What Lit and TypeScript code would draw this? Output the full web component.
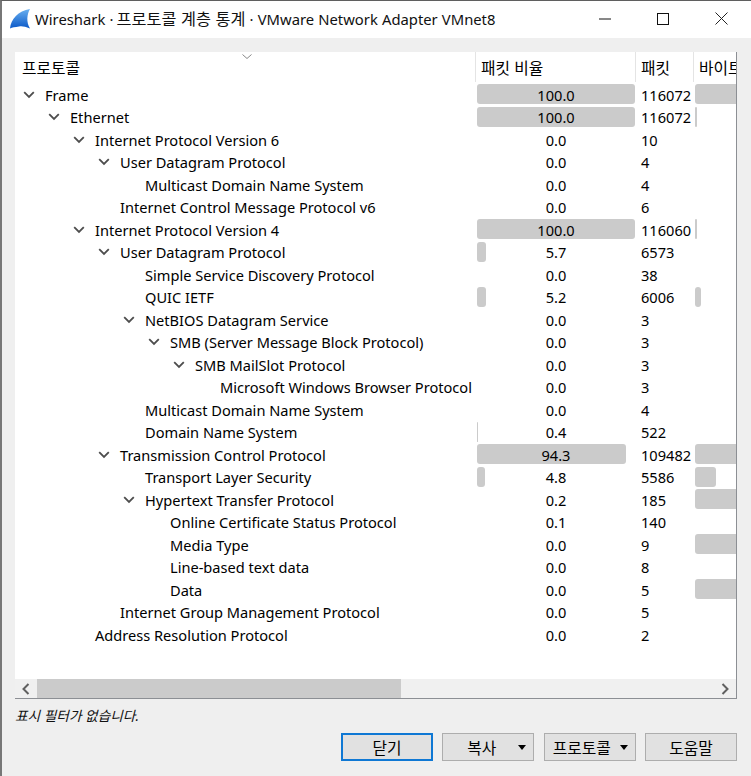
import { LitElement, html, css } from "lit";
import { customElement } from "lit/decorators.js";

type Row = { d: number; n: string; open?: boolean; p: string; pw: number; c: string; bw: number };
const rows: Row[] = [
  { d: 0, n: "Frame", open: true, p: "100.0", pw: 158, c: "116072", bw: 60 },
  { d: 1, n: "Ethernet", open: true, p: "100.0", pw: 158, c: "116072", bw: 1.5 },
  { d: 2, n: "Internet Protocol Version 6", open: true, p: "0.0", pw: 0, c: "10", bw: 0 },
  { d: 3, n: "User Datagram Protocol", open: true, p: "0.0", pw: 0, c: "4", bw: 0 },
  { d: 4, n: "Multicast Domain Name System", p: "0.0", pw: 0, c: "4", bw: 0 },
  { d: 3, n: "Internet Control Message Protocol v6", p: "0.0", pw: 0, c: "6", bw: 0 },
  { d: 2, n: "Internet Protocol Version 4", open: true, p: "100.0", pw: 158, c: "116060", bw: 1.5 },
  { d: 3, n: "User Datagram Protocol", open: true, p: "5.7", pw: 9, c: "6573", bw: 0 },
  { d: 4, n: "Simple Service Discovery Protocol", p: "0.0", pw: 0, c: "38", bw: 0 },
  { d: 4, n: "QUIC IETF", p: "5.2", pw: 9, c: "6006", bw: 6 },
  { d: 4, n: "NetBIOS Datagram Service", open: true, p: "0.0", pw: 0, c: "3", bw: 0 },
  { d: 5, n: "SMB (Server Message Block Protocol)", open: true, p: "0.0", pw: 0, c: "3", bw: 0 },
  { d: 6, n: "SMB MailSlot Protocol", open: true, p: "0.0", pw: 0, c: "3", bw: 0 },
  { d: 7, n: "Microsoft Windows Browser Protocol", p: "0.0", pw: 0, c: "3", bw: 0 },
  { d: 4, n: "Multicast Domain Name System", p: "0.0", pw: 0, c: "4", bw: 0 },
  { d: 4, n: "Domain Name System", p: "0.4", pw: 1, c: "522", bw: 0 },
  { d: 3, n: "Transmission Control Protocol", open: true, p: "94.3", pw: 149, c: "109482", bw: 60 },
  { d: 4, n: "Transport Layer Security", p: "4.8", pw: 8, c: "5586", bw: 21 },
  { d: 4, n: "Hypertext Transfer Protocol", open: true, p: "0.2", pw: 0, c: "185", bw: 60 },
  { d: 5, n: "Online Certificate Status Protocol", p: "0.1", pw: 0, c: "140", bw: 0 },
  { d: 5, n: "Media Type", p: "0.0", pw: 0, c: "9", bw: 60 },
  { d: 5, n: "Line-based text data", p: "0.0", pw: 0, c: "8", bw: 0 },
  { d: 5, n: "Data", p: "0.0", pw: 0, c: "5", bw: 60 },
  { d: 3, n: "Internet Group Management Protocol", p: "0.0", pw: 0, c: "5", bw: 0 },
  { d: 2, n: "Address Resolution Protocol", p: "0.0", pw: 0, c: "2", bw: 0 },
];

@customElement("app-root")
export class AppRoot extends LitElement {
  static styles = css`
    :host {
      display: block;
      width: 751px;
      height: 776px;
      overflow: hidden;
      font-family: "Noto Sans", "Noto Sans CJK KR", sans-serif;
      font-size: 14.6px;
      color: #000;
      background: #efefef;
    }
    .win {
      height: 776px;
      box-sizing: border-box;
      border-top: 1px solid #5f5f5f;
      border-left: 2px solid #777;
      display: flex;
      flex-direction: column;
    }
    .title {
      height: 37px;
      flex: none;
      background: #fff;
      display: flex;
      align-items: center;
      padding-left: 8px;
      white-space: nowrap;
      color: #111;
      font-size: 14.8px;
    }
    .logo { width: 20px; height: 20px; flex: none; margin: -1px 5px 0 0; }
    .title .t { flex: 1; line-height: 20px; margin-top: -2px; word-spacing: 0.3px; }
    .ko { font-size: 16.3px; line-height: 16px; margin-left: -1px; }
    .wb { width: 58.5px; height: 36px; display: flex; align-items: center; justify-content: center; flex: none; }
    .wb svg { display: block; margin-top: -2px; }
    .body { flex: 1; display: flex; flex-direction: column; padding: 14px 14px 0 13px; min-height: 0; }
    .tree {
      height: 647px;
      flex: none;
      box-sizing: border-box;
      background: #fff;
      border-right: 1px solid #8c8f94;
      border-bottom: 1px solid #8c8f94;
      display: flex;
      flex-direction: column;
      position: relative;
    }
    .sort { position: absolute; left: 227px; top: 2px; }
    .list { flex: 1; min-height: 0; overflow: hidden; }
    .grid { display: grid; grid-template-columns: 461px 160px 58px 42px; }
    .head { height: 32px; align-items: start; }
    .hc {
      height: 30px;
      display: flex;
      align-items: center;
      padding: 0 0 0 5px;
      white-space: nowrap;
      overflow: hidden;
      border-right: 1px solid #e4e4e4;
      box-sizing: border-box;
      font-size: 15.8px;
    }
    .hc.first { padding-left: 7px; }
    .hc.last { border-right: 0; }
    .row { height: 22.5px; }
    .name { display: flex; align-items: center; white-space: nowrap; overflow: hidden; height: 21.5px; }
    .tw { width: 25px; margin-right: 4px; flex: none; display: flex; justify-content: center; }
    .indent { flex: none; }
    .num { position: relative; height: 21.5px; display: flex; align-items: center; white-space: nowrap; }
    .pct { justify-content: center; }
    .cnt { padding-left: 5px; }
    .bar {
      position: absolute;
      left: 1px;
      top: 0;
      height: 20px;
      background: #cbcbcb;
      border-radius: 3px;
    }
    .bar.b3 { left: 1px; }
    .bar.b3.full { border-radius: 3px 0 0 3px; }
    .cell3 { overflow: hidden; }
    .lbl { position: relative; }
    .sb { height: 19px; flex: none; background: #f0f0f0; display: flex; align-items: stretch; }
    .arrow { width: 22px; flex: none; display: flex; align-items: center; justify-content: center; }
    .thumb { width: 364px; flex: none; background: #cbcbcb; }
    .fill { flex: 1; }
    .status { height: 32px; flex: none; font-style: italic; font-size: 13.7px; display: flex; align-items: center; color: #111; }
    .btns { display: flex; justify-content: flex-end; gap: 9.33px; padding-top: 2px; }
    .btn {
      width: 92px;
      height: 28px;
      box-sizing: border-box;
      border: 1px solid #adadad;
      background: #e1e1e1;
      display: flex;
      align-items: center;
      justify-content: center;
      position: relative;
      font-size: 15.8px;
    }
    .btn.def { border: 2px solid #0f78d4; }
    .btn.menu { padding-right: 13px; }
    .btn .caret {
      position: absolute;
      right: 7px;
      top: 11px;
      width: 0;
      height: 0;
      border-left: 4.5px solid transparent;
      border-right: 4.5px solid transparent;
      border-top: 5px solid #000;
    }
    .btn.proto { justify-content: flex-start; padding-left: 8px; padding-right: 0; }
  `;

  private chev() {
    return html`<svg width="12" height="8" viewBox="0 0 12 8"><path d="M1.2 1.2 L6 6 L10.8 1.2" fill="none" stroke="#4d4d4d" stroke-width="1.8"/></svg>`;
  }

  render() {
    return html`<div class="win">
      <div class="title">
        <svg class="logo" viewBox="0 0 20 20">
          <defs><linearGradient id="g" x1="0" y1="0" x2="0" y2="1"><stop offset="0" stop-color="#6ab0f0"/><stop offset="1" stop-color="#0a58c8"/></linearGradient></defs>
          <path d="M0 19.5 C1 10 8 2 20 0 C17 5 16 13 20 19.5 C15 17.5 12 17 9 17.5 C5 18 2 18.5 0 19.5Z" fill="url(#g)"/>
        </svg>
        <span class="t">Wireshark · <span class="ko">프로토콜 계층 통계</span> · VMware Network Adapter VMnet8</span>
        <div class="wb"><svg width="12" height="2" viewBox="0 0 12 2"><path d="M0 1H12" stroke="#111" stroke-width="1"/></svg></div>
        <div class="wb"><svg width="12" height="12" viewBox="0 0 12 12"><rect x=".5" y=".5" width="11" height="11" fill="none" stroke="#111"/></svg></div>
        <div class="wb"><svg width="13" height="13" viewBox="0 0 13 13"><path d="M.5 .5L12.5 12.5M12.5 .5L.5 12.5" stroke="#222" stroke-width="1"/></svg></div>
      </div>
      <div class="body">
        <div class="tree">
          <svg class="sort" width="10" height="6" viewBox="0 0 10 6"><path d="M.5 .5L5 4.5L9.5 .5" fill="none" stroke="#888"/></svg>
          <div class="grid head">
            <div class="hc first">프로토콜</div>
            <div class="hc">패킷 비율</div>
            <div class="hc">패킷</div>
            <div class="hc last">바이트</div>
          </div>
          <div class="list">
            ${rows.map(
              (r) => html`<div class="grid row">
                <div class="name">
                  <span class="indent" style="width:${r.d * 25 + 1}px"></span>
                  <span class="tw">${r.open ? this.chev() : ""}</span>
                  <span class="lbl">${r.n}</span>
                </div>
                <div class="num pct">
                  ${r.pw ? html`<span class="bar" style="width:${r.pw}px"></span>` : ""}
                  <span class="lbl">${r.p}</span>
                </div>
                <div class="num cnt">${r.c}</div>
                <div class="num cell3">
                  ${r.bw ? html`<span class="bar b3 ${r.bw >= 60 ? "full" : ""}" style="width:${r.bw}px"></span>` : ""}
                </div>
              </div>`
            )}
          </div>
          <div class="sb">
            <div class="arrow"><svg width="8" height="12" viewBox="0 0 8 12"><path d="M6.5 1L1.5 6L6.5 11" fill="none" stroke="#606060" stroke-width="2"/></svg></div>
            <div class="thumb"></div>
            <div class="fill"></div>
            <div class="arrow"><svg width="8" height="12" viewBox="0 0 8 12"><path d="M1.5 1L6.5 6L1.5 11" fill="none" stroke="#606060" stroke-width="2"/></svg></div>
          </div>
        </div>
        <div class="status">표시 필터가 없습니다.</div>
        <div class="btns">
          <div class="btn def">닫기</div>
          <div class="btn menu">복사<span class="caret"></span></div>
          <div class="btn menu proto">프로토콜<span class="caret"></span></div>
          <div class="btn">도움말</div>
        </div>
      </div>
    </div>`;
  }
}
